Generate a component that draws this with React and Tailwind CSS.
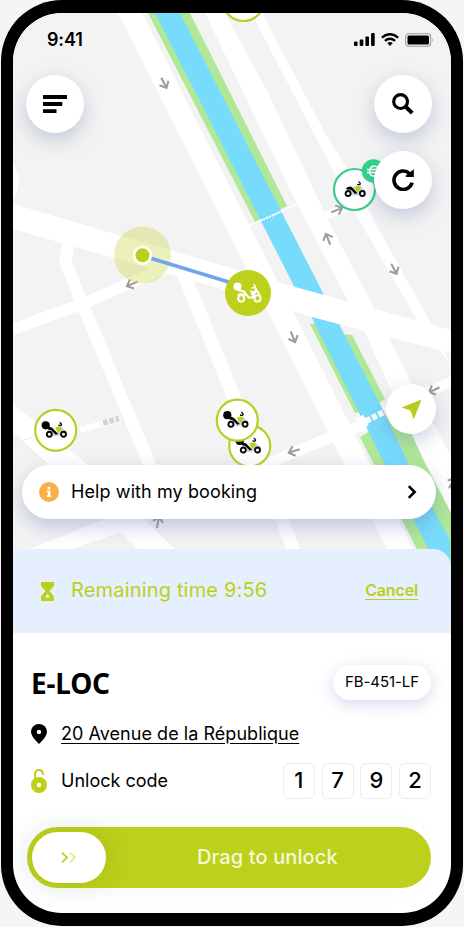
import React from "react";

const ARROWS = [
  [164, 83, 63],
  [132, 284, 157],
  [337, 210, -22],
  [328, 239, -112],
  [394, 269, 63],
  [293, 337, 67],
  [434, 390, 155],
  [294, 451, 162],
  [158, 522, -80],
  [452, 483, -60],
];

function Arrow({ x, y, angle }) {
  return (
    <path
      d="M-6 0H5M0 -5L5.5 0L0 5"
      transform={`translate(${x} ${y}) rotate(${angle})`}
      fill="none"
      stroke="#9d9d9d"
      strokeWidth="2.1"
    />
  );
}

function Scooter({ rider = true }) {
  return (
    <g>
      <path d="M-8.500 0.500L-4.500 -2.500L1 3L5.500 -5L7.500 -1.500L10.500 0.500L9 2.500L5 3.500L3 6H-3L-4 2Z" fill="#d3d5ea" />
      {rider && <circle cx="-10" cy="-5" r="4.100" fill="#050505" />}
      <path
        d={rider ? "M-9.500 -3Q-5 -4.500 -2.500 -1.500L2.500 3.700L0 4.500L-4.500 0L-7.500 -0.800Z" : "M-8.500 -1.500Q-4 -4.500 -1.500 -1.500L3 3.700L0.500 4.500L-3.500 0.300L-7.500 0Z"}
        fill="#050505"
      />
      <path d="M-0.500 -2.500L3 -3.800L5.800 -2.800L6 0L3.500 2.500L1.500 1.500Z" fill="#bccf1a" />
      <path d="M2.700 -5.300Q4.500 -4.300 5.800 -5.400Q6 -7 4 -8" stroke="#050505" strokeWidth="1.300" fill="none" />
      <circle cx="-6.400" cy="4" r="2.500" fill="#fff" stroke="#050505" strokeWidth="1.900" />
      <circle cx="7.800" cy="4" r="2.500" fill="#fff" stroke="#050505" strokeWidth="1.900" />
    </g>
  );
}

function SelectedScooter() {
  return (
    <g fill="none" stroke="#fff">
      <circle cx="-10.500" cy="-6.500" r="4.100" fill="#fff" stroke="none" />
      <path d="M-10 -3L-4 -1.500L0.500 4.500H5L8 -3.500L12 3" strokeWidth="2.100" />
      <path d="M-10.500 2.500Q-7 -0.500 -3 2.500" strokeWidth="1.900" />
      <path d="M2 -3L5 -1.500L7.500 -3L6 2.500H3.500Z" fill="#fff" stroke="none" />
      <path d="M3.500 -5.300Q6 -4.500 7.300 -6Q7.200 -7.800 5.500 -8.500" strokeWidth="1.500" />
      <circle cx="-6.800" cy="5.500" r="3.100" strokeWidth="1.900" fill="#bdd01b" />
      <circle cx="9.500" cy="5.500" r="3.100" strokeWidth="1.900" fill="#bdd01b" />
    </g>
  );
}

function Marker({ x, y, color = "#b9cf23", rider = true }) {
  return (
    <g transform={`translate(${x} ${y})`}>
      <circle r="20.500" fill="#fff" stroke={color} strokeWidth="2.200" />
      <Scooter rider={rider} />
    </g>
  );
}

function CityMap() {
  return (
    <svg className="absolute inset-0" width="438" height="560" viewBox="13 13 438 560" aria-hidden="true">
      <rect x="13" y="13" width="438" height="560" fill="#f3f3f3" />
      <g fill="#b0e897">
        <polygon points="148,13 190,13 287,206 255,222" />
        <polygon points="310,324 335,322 364,411 355,413" />
        <polygon points="339,334 352,335 385,399 378,404" />
        <polygon points="360,437 372,430 400,400 455,519 455,573 429,573" />
      </g>
      <g fill="#77dbfc">
        <polygon points="155,13 180,13 324,295 295,288" />
        <polygon points="311,316 339,324 384,412 408,463 450,540 450,573 441,573 384,463" />
      </g>
      <g fill="#fff">
        <polygon points="118,13 142,13 420,563 394,563" />
        <polygon points="205,13 225,13 268,93 329,222 374,308 412,385 455,463 455,520 425,463 365,333 295,200" />
        <polygon points="254,18 252,13 262,13 325,133 346,167 379,230 432,325 451,367 445,357 420,325 355,213" />
        <polygon points="13,204 295,287 451,330 451,353 312,317 232,292 13,229" />
        <polygon points="13,404 86,463 175,549 192,565 155,565 138,549 13,432" />
        <polygon points="30,549 115,515 138,526 72,549" />
        <path d="M13 164Q19 172 19 181Q18 190 14 199H13Z" />
      </g>
      <g fill="none" stroke="#fff">
        <path d="M69 238L65.500 262L84 308L149 463L160 500" strokeWidth="12.500" strokeLinejoin="round" />
        <path d="M13 329L82 304L138 280L165 268" strokeWidth="11.500" />
        <path d="M183 272L230 388L262 463L295 555" strokeWidth="13.500" />
        <path d="M262 466L345 431L366 425" strokeWidth="11" />
        <path d="M384 411L455 380" strokeWidth="10" />
        <path d="M318 218L352 206" strokeWidth="8" />
        <path d="M250 225L262 220" strokeWidth="1.500" />
        <path d="M284 210L298 204" strokeWidth="1.500" />
        <path d="M260 221L287 209" strokeWidth="2" strokeDasharray="2.500 0.700" />
        <path d="M358 424L366 420" strokeWidth="12" />
        <path d="M366 421L388 410" strokeWidth="6" strokeDasharray="5 2" />
        <path d="M80 430L121 418.500" strokeWidth="6" strokeDasharray="6 1" />
      </g>
      <path d="M103 423L119 418.500" stroke="#d2d2d2" strokeWidth="5.500" strokeDasharray="5 1.500" fill="none" />
      <path d="M13 444L33 437M25 444L50 466" stroke="#ebebeb" strokeWidth="1" fill="none" />
      {ARROWS.map(([x, y, angle]) => (
        <Arrow key={`${x}-${y}`} x={x} y={y} angle={angle} />
      ))}

      <circle cx="142.500" cy="255" r="28.500" fill="#c5d42d" fillOpacity="0.32" />
      <path d="M150 258L232 283" stroke="#70a4ee" strokeWidth="3.600" />
      <circle cx="142.500" cy="255.300" r="8.300" fill="#bccf1a" stroke="#fff" strokeWidth="2.600" />
      <circle cx="248" cy="293" r="23" fill="#bdd01b" />
      <g transform="translate(248 293)">
        <SelectedScooter />
      </g>

      <Marker x={243.5} y={0.5} />
      <Marker x={55.7} y={430.3} />
      <Marker x={249.7} y={446} />
      <Marker x={237.3} y={420.2} />
      <Marker x={354.5} y={189.5} color="#3bcb85" rider={false} />
      <circle cx="373.500" cy="171" r="11.800" fill="#33d38a" />
      <path d="M378 167.500Q372.500 164 370 169Q368.500 175 373 176Q376 176.500 378 174.500M367 169.500H376M367 172.500H376" fill="none" stroke="#fff" strokeWidth="1.600" />
    </svg>
  );
}

function RoundButton({ label, size = "size-[58px]", children }) {
  return (
    <button
      aria-label={label}
      className={`${size} flex items-center justify-center rounded-full bg-white shadow-[0_7px_20px_rgba(90,110,165,0.32)]`}
    >
      {children}
    </button>
  );
}

function StatusBar() {
  return (
    <div className="flex h-[53px] items-center justify-between pr-[17px] pl-[34px]">
      <span className="text-[18px] font-semibold tracking-[-0.01em]">9:41</span>
      <div className="flex items-center gap-[6px]">
        <svg width="21" height="13" viewBox="0 0 21 13">
          <rect x="0" y="8.500" width="3.600" height="4.500" rx="1" />
          <rect x="5.700" y="6.500" width="3.600" height="6.500" rx="1" />
          <rect x="11.400" y="3.500" width="3.600" height="9.500" rx="1" />
          <rect x="17.100" y="0" width="3.600" height="13" rx="1" />
        </svg>
        <svg width="18" height="13" viewBox="0 0 18 13" fill="none" stroke="#000" strokeWidth="2.400">
          <path d="M0.900 4.600Q9 -2.200 17.100 4.600" />
          <path d="M3.900 7.900Q9 3.700 14.100 7.900" />
          <path d="M6.200 10.100Q9 7.800 11.800 10.100L9 13Z" fill="#000" stroke="none" />
        </svg>
        <svg width="29" height="14" viewBox="0 0 29 14">
          <rect x="0.700" y="0.700" width="25" height="12.600" rx="3" fill="none" stroke="#9a9a9a" strokeWidth="1.100" />
          <rect x="2.500" y="2.500" width="21.500" height="9" rx="1.500" />
          <path d="M27.200 4.800Q28.800 7 27.200 9.200Z" fill="#9a9a9a" />
        </svg>
      </div>
    </div>
  );
}

export default function App() {
  return (
    <div className="h-[927px] w-[464px] overflow-hidden bg-[#f5f5f5] pl-px font-['Inter','Liberation_Sans',sans-serif] text-black">
      <div className="h-[926px] w-[462px] rounded-[61px] bg-black px-[12px] py-[13px]">
        <main className="h-[900px] w-[438px] overflow-hidden rounded-[49px] bg-white">
          <section className="relative h-[536px]">
            <CityMap />
            <div className="relative flex h-full flex-col">
              <StatusBar />
              <div className="flex items-start justify-between pt-[8.500px] pr-[19px] pl-[13px]">
                <RoundButton label="Menu">
                  <svg width="24" height="18" viewBox="0 0 24 18">
                    <path d="M0 0H24V4H0ZM0 7H19.300V11H0ZM0 14.300H13.500V18.100H0Z" />
                  </svg>
                </RoundButton>
                <div className="flex flex-col gap-[18px]">
                  <RoundButton label="Search">
                    <svg width="22" height="22" viewBox="0 0 22 22" fill="none" stroke="#000">
                      <circle cx="8.600" cy="8.600" r="6.900" strokeWidth="3.200" />
                      <path d="M13.500 13.500L20.200 20.200" strokeWidth="4" />
                    </svg>
                  </RoundButton>
                  <RoundButton label="Refresh">
                    <svg width="22" height="22" viewBox="0 0 22 22">
                      <path d="M20.100 13.600A9.200 9.200 0 1 1 17.500 4.500" fill="none" stroke="#000" strokeWidth="3.600" />
                      <path d="M21.800 0.300V8H13.800V6.500Z" />
                    </svg>
                  </RoundButton>
                </div>
              </div>
              <div className="mt-auto mb-[30px] flex flex-col pr-[15px] pl-[9px]">
                <div className="mb-[31px] self-end">
                  <RoundButton label="My location" size="size-[50px]">
                    <svg width="21" height="21" viewBox="0 0 21 21">
                      <path d="M20.500 0.500L12.800 20.500L9.500 11.500L0.500 8.500Z" fill="#b7cc1c" />
                    </svg>
                  </RoundButton>
                </div>
                <button className="flex h-[54px] items-center rounded-full bg-white pr-[19px] pl-[17px] shadow-[0_7px_20px_rgba(90,110,165,0.36)]">
                  <svg width="20" height="20" viewBox="0 0 20 20">
                    <circle cx="10" cy="10" r="10" fill="#fcae49" />
                    <path d="M8.700 4.800H11.300V7.300H8.700ZM7.800 8.600H11.300V13.300H12.300V15H7.800V13.300H8.800V10.200H7.800Z" fill="#fff" />
                  </svg>
                  <span className="ml-[12px] pb-[2px] text-[18px] tracking-[0.1px] whitespace-nowrap">Help with my booking</span>
                  <svg className="ml-auto" width="10" height="14" viewBox="0 0 10 14" fill="none" stroke="#000" strokeWidth="2.600">
                    <path d="M1.800 1.200L7.600 7L1.800 12.800" />
                  </svg>
                </button>
              </div>
            </div>
          </section>

          <section className="relative flex h-[84px] items-center rounded-tl-[3px] rounded-tr-[18px] bg-[#e6effd] pr-[33px] pl-[28px] text-[#bccf1a]">
            <svg width="13" height="19" viewBox="0 0 13 19" fill="#bccf1a">
              <path d="M0 0H13V4L8.500 9L13 14.500V19H0V14.500L4.500 9L0 4Z" />
              <path d="M6.500 11.500L9 15.500H4Z" fill="#e6effd" />
            </svg>
            <span className="ml-[17px] pb-[2px] text-[20px] tracking-[0.17px] whitespace-nowrap">Remaining time 9:56</span>
            <button className="ml-auto pb-[2px] text-[16px] font-semibold tracking-[-0.15px] underline underline-offset-[3px]">Cancel</button>
          </section>

          <section className="flex flex-col pr-[20px] pl-[18px]">
            <div className="mt-[32px] flex h-[35px] items-center justify-between">
              <h1 className="font-['Noto_Sans','Open_Sans',sans-serif] text-[28px] leading-none font-bold tracking-[-0.2px]">E-LOC</h1>
              <span className="flex h-[35px] w-[98px] items-center justify-center rounded-full bg-white text-[15px] tracking-[-0.1px] shadow-[0_4px_16px_rgba(90,120,180,0.28)]">
                FB-451-LF
              </span>
            </div>
            <div className="mt-[20px] flex h-[28px] items-center">
              <svg width="16" height="20" viewBox="0 0 16 20">
                <path d="M8 0A8 8 0 0 1 16 8Q16 12.500 8 20Q0 12.500 0 8A8 8 0 0 1 8 0Z" />
                <circle cx="8" cy="8" r="2.200" fill="#fff" />
              </svg>
              <a className="ml-[14px] pb-[2px] text-[18px] tracking-[0.04px] whitespace-nowrap underline underline-offset-[3px]">20 Avenue de la République</a>
            </div>
            <div className="mt-[15px] flex h-[36px] items-center">
              <svg width="16" height="24" viewBox="0 0 16 24">
                <circle cx="8" cy="16" r="8" fill="#bccf1a" />
                <circle cx="8" cy="16" r="2.200" fill="#fff" />
                <path d="M4 10V5Q4.300 1 8 1Q11.500 1 12 5V6" fill="none" stroke="#bccf1a" strokeWidth="2" />
              </svg>
              <span className="ml-[14px] pb-[2px] text-[18px] whitespace-nowrap">Unlock code</span>
              <div className="ml-auto flex gap-[6.700px]">
                {["1", "7", "9", "2"].map((digit) => (
                  <span key={digit} className="flex h-[36px] w-[32px] items-center justify-center rounded-[6px] border border-[#ececec] pb-px text-[22px] font-medium">
                    {digit}
                  </span>
                ))}
              </div>
            </div>
            <div className="mt-[28px] -ml-[4px] flex h-[61px] items-center rounded-full bg-[#bdd01b] pl-[5px] shadow-[-10px_0_26px_rgba(90,120,200,0.06)]">
              <div className="flex h-[51px] w-[74px] items-center justify-center rounded-full bg-white shadow-[4px_0_26px_rgba(80,100,30,0.16)]">
                <svg width="16" height="11" viewBox="0 0 16 11" fill="none" stroke="#bccf1a" strokeWidth="1.800">
                  <path d="M1 0.700L6 5.500L1 10.300" />
                  <path d="M9 0.700L14 5.500L9 10.300" strokeOpacity="0.45" />
                </svg>
              </div>
              <span className="ml-[91px] pb-[2px] text-[20px] font-medium tracking-[0.12px] whitespace-nowrap text-[#f3f9d9]">Drag to unlock</span>
            </div>
          </section>
        </main>
      </div>
    </div>
  );
}
